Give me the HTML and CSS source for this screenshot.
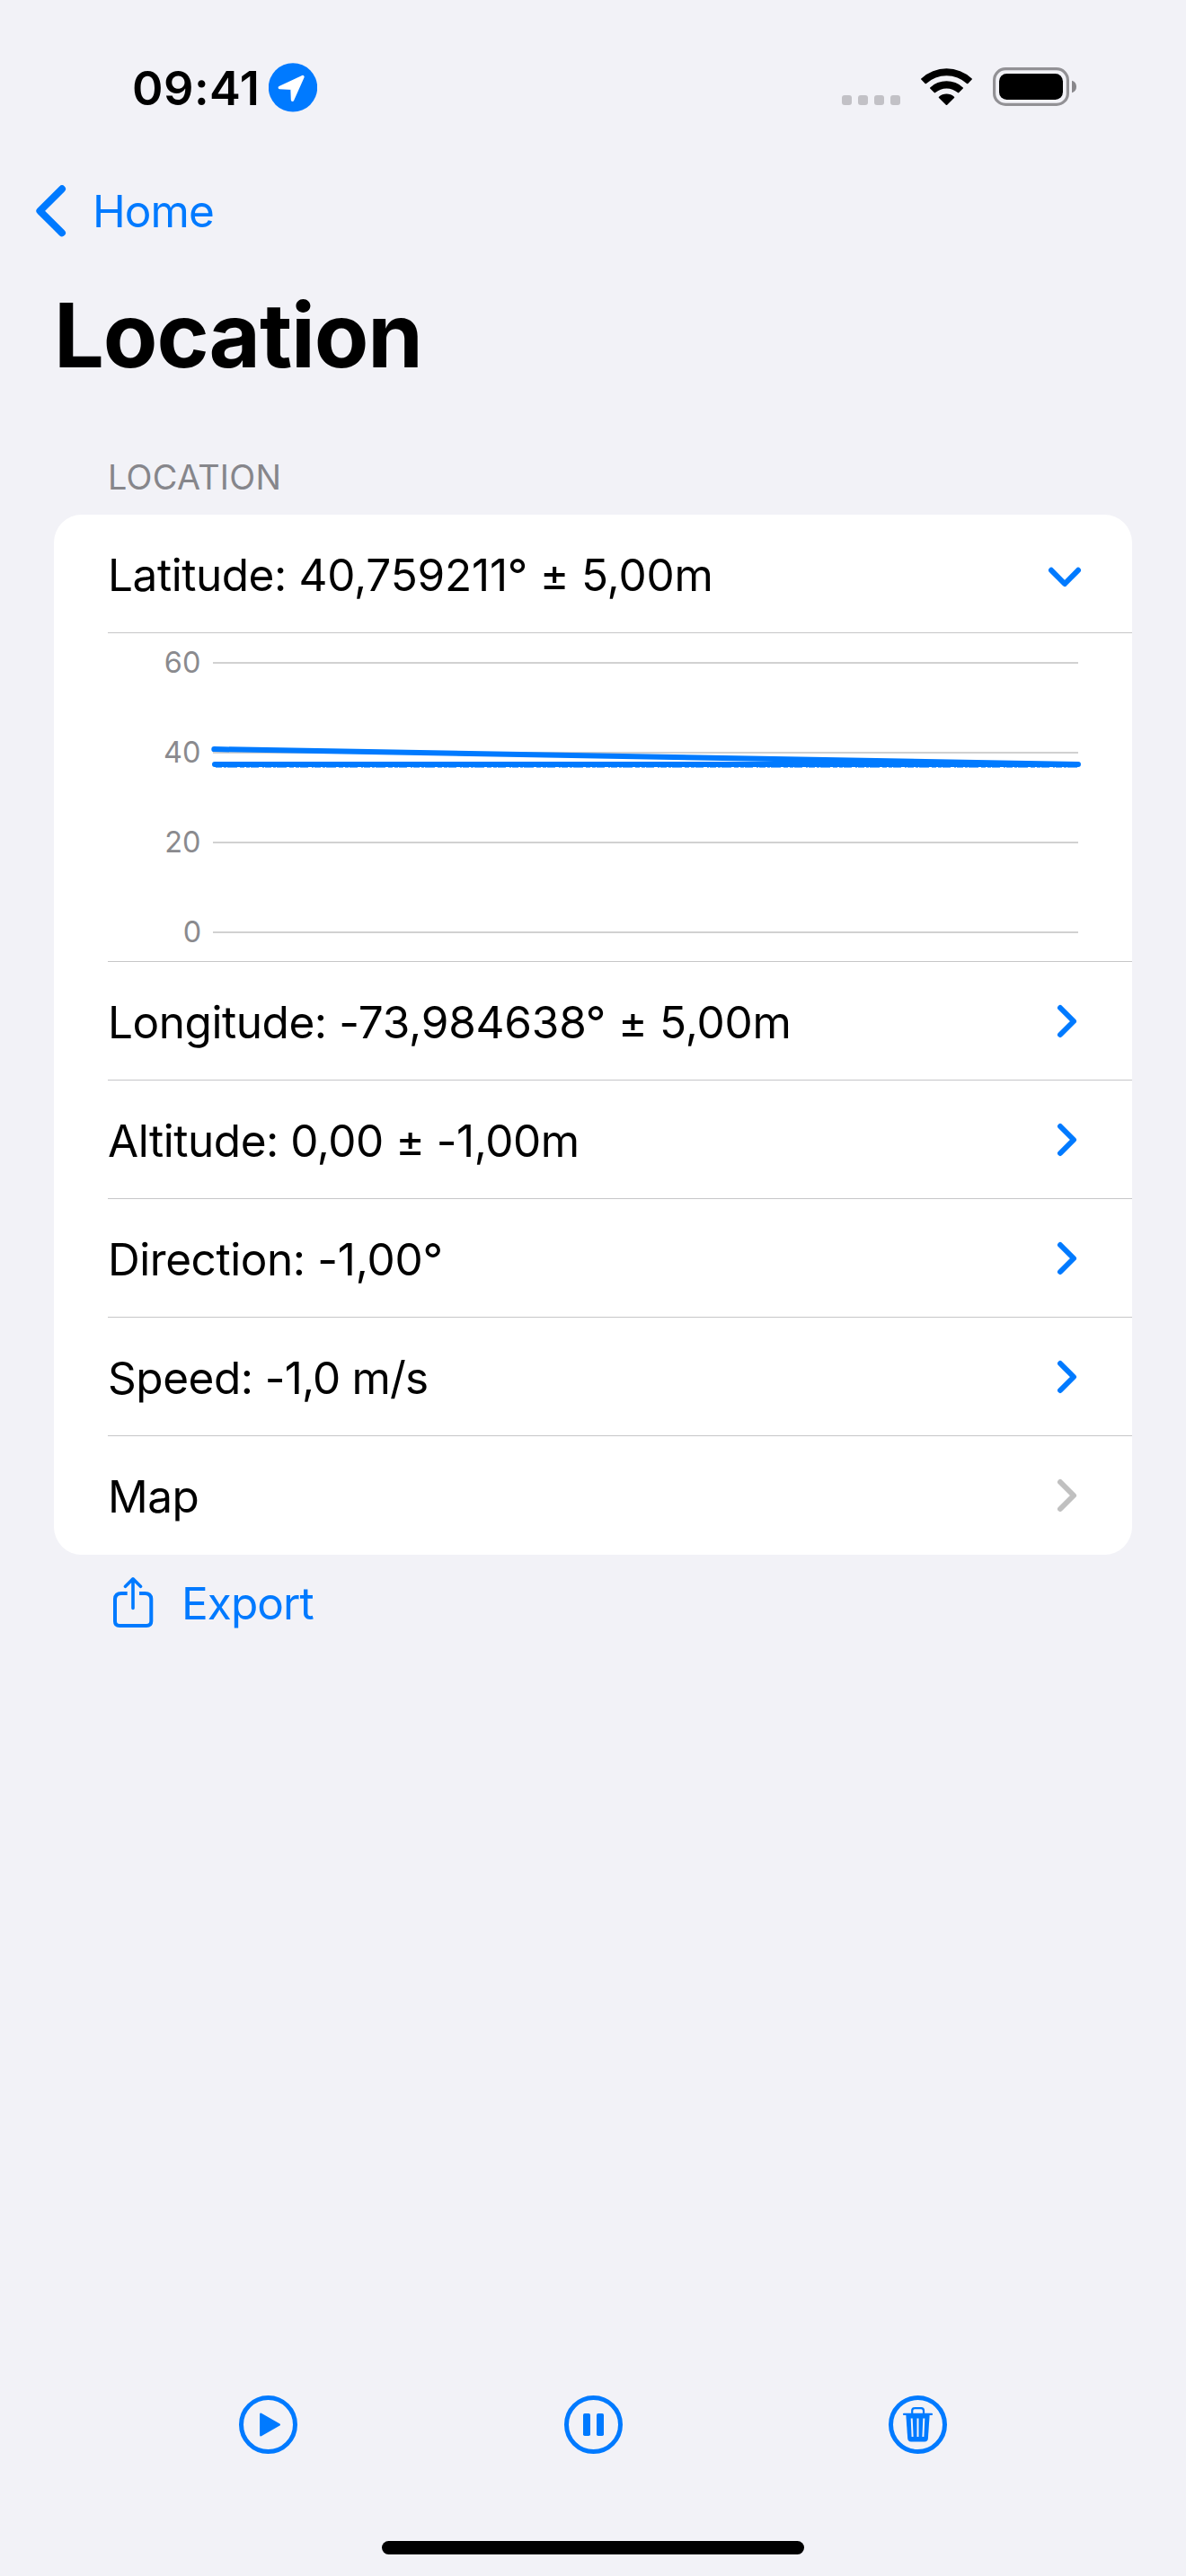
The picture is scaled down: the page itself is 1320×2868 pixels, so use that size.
FILE: index.html
```
<!DOCTYPE html>
<html lang="en">
<head>
<meta charset="utf-8">
<title>Location</title>
<link rel="stylesheet" href="styles.css">
</head>
<body>
<div class="screen">
  <header class="status">
    <span class="time">09:41</span>
    <svg class="badge" width="54" height="56" viewBox="299 70 54 56">
      <circle cx="326" cy="97.4" r="27.2" fill="#007aff"/>
      <path d="M337 85.5L311.3 97.6L325 98.3L325.5 111.3Z" fill="#fff" stroke="#fff" stroke-width="3.4" stroke-linejoin="round"/>
    </svg>
    <svg class="signal" width="65" height="56" viewBox="937 70 65 56" fill="#c2c1c6">
      <rect x="937" y="106" width="11" height="11" rx="3"/>
      <rect x="955" y="106" width="11" height="11" rx="3"/>
      <rect x="973" y="106" width="11" height="11" rx="3"/>
      <rect x="991" y="106" width="11" height="11" rx="3"/>
    </svg>
    <svg width="57" height="56" viewBox="1025 70 57 56">
      <path d="M1025.3 87.4A41.5 41.5 0 0 1 1081.7 87.4Q1082.300 88 1081.700 88.600L1077.400 92.900Q1076.700 93.500 1076 92.900A33.300 33.300 0 0 0 1031 92.900Q1030.300 93.500 1029.600 92.900L1025.300 88.600Q1024.700 88 1025.300 87.400Z"/>
      <path d="M1035.200 97.400A27 27 0 0 1 1071.800 97.400Q1072.400 98 1071.800 98.600L1067.300 103.100Q1066.600 103.700 1065.900 103.100A18.800 18.800 0 0 0 1041.100 103.100Q1040.400 103.700 1039.700 103.100L1035.200 98.600Q1034.600 98 1035.200 97.400Z"/>
      <path d="M1045 107.700A12.700 12.700 0 0 1 1062 107.700Q1062.700 108.300 1062 109L1054.200 116.700Q1053.500 117.300 1052.800 116.700L1045 109Q1044.300 108.300 1045 107.700Z"/>
    </svg>
    <svg width="93" height="56" viewBox="1105 70 93 56">
      <rect x="1106.600" y="76.600" width="81.800" height="39.800" rx="12.500" fill="none" stroke="#929195" stroke-width="3.200"/>
      <rect x="1112" y="82" width="71" height="29" rx="8.500"/>
      <path d="M1193 89.800Q1198 91.500 1198 96.500Q1198 101.500 1193 103.200Z" fill="#88878b"/>
    </svg>
  </header>

  <nav class="nav">
    <svg width="34" height="60" viewBox="40 205 34 60">
      <path d="M69 210.300L44.400 234.800L69 259.300" fill="none" stroke="#007aff" stroke-width="8" stroke-linecap="round" stroke-linejoin="round"/>
    </svg>
    <a class="link back">Home</a>
  </nav>

  <h1 class="title">Location</h1>
  <h2 class="section">LOCATION</h2>

  <main class="card">
    <div class="row">
      <p class="text"><span class="label">Latitude:</span> 40,759211° ± 5,00m</p>
      <svg class="down" width="42" height="30" viewBox="1164 627 42 30"><path class="chev" d="M1170 634.800L1185 650L1200 634.800"/></svg>
    </div>
    <div class="chart">
      <svg width="1140" height="365" viewBox="120 705 1140 365">
        <g class="grid">
          <path d="M237 738H1200M237 838H1200M237 938H1200M237 1038H1200"/>
        </g>
        <g class="axis">
          <text x="223.400" y="749.300">60</text>
          <text x="223.400" y="849.300">40</text>
          <text x="223.400" y="949.300">20</text>
          <text x="224.200" y="1049.300">0</text>
        </g>
        <path class="series" d="M238.300 834.100L1200 850.900L239 850.900"/>
        <path class="noise" d="M240 854.300H1200"/>
      </svg>
    </div>
    <div class="row">
      <p class="text"><span class="label">Longitude:</span> -73,984638° ± 5,00m</p>
      <svg width="30" height="42" viewBox="1173 1116 30 42"><path class="chev" d="M1180 1122L1195 1137L1180 1152"/></svg>
    </div>
    <div class="row">
      <p class="text tight"><span class="label">Altitude:</span> 0,00 ± -1,00m</p>
      <svg width="30" height="42" viewBox="1173 1116 30 42"><path class="chev" d="M1180 1122L1195 1137L1180 1152"/></svg>
    </div>
    <div class="row">
      <p class="text"><span class="label">Direction:</span> -1,00°</p>
      <svg width="30" height="42" viewBox="1173 1116 30 42"><path class="chev" d="M1180 1122L1195 1137L1180 1152"/></svg>
    </div>
    <div class="row">
      <p class="text tighter"><span class="label">Speed:</span> -1,0 m/s</p>
      <svg width="30" height="42" viewBox="1173 1116 30 42"><path class="chev" d="M1180 1122L1195 1137L1180 1152"/></svg>
    </div>
    <div class="row">
      <p class="text"><span class="label">Map</span></p>
      <svg width="30" height="42" viewBox="1173 1116 30 42"><path class="chev muted" d="M1180 1122L1195 1137L1180 1152"/></svg>
    </div>
  </main>

  <div class="export">
    <svg width="46" height="60" viewBox="125 1755 46 60">
      <path d="M141.700 1774H135Q128 1774 128 1781V1805Q128 1810 133 1810H163Q168.300 1810 168.300 1805V1781Q168.300 1774 161.300 1774H155" fill="none" stroke="#007aff" stroke-width="4"/>
      <path d="M148 1790.500V1758M139.500 1766.300L148 1757.800L156.500 1766.300" fill="none" stroke="#007aff" stroke-width="3.600" stroke-linecap="round" stroke-linejoin="round"/>
    </svg>
    <a class="link">Export</a>
  </div>

  <footer class="toolbar">
    <svg width="67" height="67" viewBox="265 2666 67 67">
      <circle class="ring" cx="298.500" cy="2699.500" r="30"/>
      <path d="M290.300 2687.700V2711.300L310.800 2699.500Z" fill="#007aff" stroke="#007aff" stroke-width="2.400" stroke-linejoin="round"/>
    </svg>
    <svg width="67" height="67" viewBox="626 2666 67 67" fill="#007aff">
      <circle class="ring" cx="659.500" cy="2699.500" r="30"/>
      <rect x="648" y="2687" width="8" height="25" rx="1.800"/>
      <rect x="663" y="2687" width="8" height="25" rx="1.800"/>
    </svg>
    <svg width="67" height="67" viewBox="988 2666 67 67">
      <circle class="ring" cx="1021.500" cy="2699.500" r="30"/>
      <path d="M1006 2687.900H1037" fill="none" stroke="#007aff" stroke-width="2.200" stroke-linecap="round"/>
      <path d="M1015.200 2687.500V2684Q1015.200 2681.200 1018 2681.200H1025.200Q1028 2681.200 1028 2684V2687.500" fill="none" stroke="#007aff" stroke-width="2.200"/>
      <path d="M1008.300 2688H1034.700L1032.900 2714.800Q1032.600 2718.600 1029 2718.600H1014Q1010.500 2718.600 1010.200 2714.800Z" fill="#007aff"/>
      <path d="M1014.700 2692.500L1015.600 2713M1021.500 2692.500V2713M1028.300 2692.500L1027.400 2713" fill="none" stroke="#f2f2f7" stroke-width="2"/>
    </svg>
  </footer>
  <div class="home"></div>
</div>
</body>
</html>
```
FILE: styles.css
```
* { box-sizing: border-box; margin: 0; padding: 0; }
body {
  background: #f2f2f7;
  color: #000;
  font-family: Inter, "Liberation Sans", sans-serif;
}
svg { display: block; flex: none; }
.screen {
  display: flex;
  flex-direction: column;
  width: 1320px;
  height: 2868px;
}
.status {
  display: flex;
  align-items: center;
  gap: 23px;
  height: 196px;
  padding: 0 122px 0 147px;
}
.time {
  width: 152px;
  margin-right: -23px;
  font-size: 52.3px;
  font-weight: 600;
  letter-spacing: 0.5px;
  white-space: nowrap;
}
.signal { margin-left: auto; }
.nav {
  display: flex;
  align-items: center;
  height: 78px;
  padding-left: 40px;
}
.link {
  color: #007aff;
  font-size: 49.5px;
  letter-spacing: -0.95px;
}
.back { margin-left: 29px; }
.title {
  margin: 39px 0 0 60px;
  font-size: 99px;
  font-weight: 700;
  line-height: 120px;
  letter-spacing: -1.12px;
}
.section {
  margin: 73px 0 17px 120px;
  color: #86868b;
  font-size: 37.8px;
  font-weight: 400;
  line-height: 50px;
  letter-spacing: 0.3px;
}
.card {
  margin: 0 60px;
  padding-left: 60px;
  border-radius: 31px;
  background: #fff;
}
.row {
  display: flex;
  align-items: center;
  justify-content: space-between;
  height: 132px;
  padding-right: 57px;
  border-bottom: 1px solid #c6c6c8;
}
.row:last-child { border-bottom-color: transparent; }
.text {
  padding-top: 3px;
  font-size: 49.5px;
  line-height: 60px;
  letter-spacing: -0.22px;
  white-space: nowrap;
}
.text .label { letter-spacing: -0.45px; }
.tight { letter-spacing: -0.5px; }
.tighter { letter-spacing: -0.85px; }
.down { margin: 6px -3px 0 0; }
.chev {
  fill: none;
  stroke: #007aff;
  stroke-width: 6;
  stroke-linecap: round;
  stroke-linejoin: round;
}
.muted { stroke: #c0c0c0; }
.chart {
  height: 366px;
  border-bottom: 1px solid #c6c6c8;
}
.grid path { stroke: #d1d1d1; stroke-width: 2; }
.axis text {
  fill: #8a8a8e;
  font-size: 32.4px;
  text-anchor: end;
}
.series {
  fill: none;
  stroke: #007aff;
  stroke-width: 6;
  stroke-linecap: round;
  stroke-linejoin: round;
}
.noise {
  fill: none;
  stroke: #007aff;
  stroke-width: 1;
  stroke-dasharray: 7 2 3 1 11 3 5 2 4 1 9 4 2 1;
  opacity: 0.7;
}
.export {
  display: flex;
  align-items: center;
  gap: 31px;
  height: 108px;
  padding-left: 125px;
}
.toolbar {
  display: flex;
  justify-content: space-between;
  margin: auto 265px 96px;
}
.ring { fill: none; stroke: #007aff; stroke-width: 5; }
.home {
  flex: none;
  width: 470px;
  height: 15px;
  margin: 0 auto 24px;
  border-radius: 8px;
  background: #000;
}
```
